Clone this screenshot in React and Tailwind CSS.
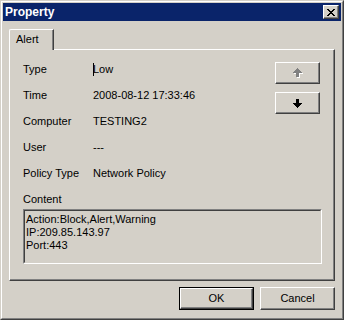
import React from "react";

function Raised({ className = "", children }) {
  return (
    <div
      className={`flex items-center justify-center bg-[#d4d0c8] border border-t-white border-l-white border-r-[#404040] border-b-[#404040] shadow-[inset_-1px_-1px_0_#808080] ${className}`}
    >
      {children}
    </div>
  );
}

function Row({ label, children }) {
  return (
    <div className="flex h-[13px] leading-[13px]">
      <div className="w-[70px]">{label}</div>
      <div className="flex items-center">{children}</div>
    </div>
  );
}

const UP = "M4 0h1v1h1v1h1v1h1v1h1v1h-3v4h-3v-4h-3v-1h1v-1h1v-1h1v-1h1z";
const DOWN = "M3 0h3v4h3v1h-1v1h-1v1h-1v1h-1v1h-1v-1h-1v-1h-1v-1h-1v-1h-1v-1h3z";

export default function App() {
  return (
    <div className="w-[344px] h-[320px] bg-[#d4d0c8] text-[11px] text-black font-['Liberation_Sans',Arial,sans-serif] border border-t-[#d4d0c8] border-l-[#d4d0c8] border-r-[#404040] border-b-[#404040]">
      <div className="h-full border border-t-white border-l-white border-r-[#808080] border-b-[#808080] p-px flex flex-col">
        {/* Title bar */}
        <div className="h-[18px] bg-[#0a246a] flex items-center justify-between pl-[2px] pr-[2px]">
          <span className="text-white font-bold text-[12px] leading-[14px]">Property</span>
          <Raised className="w-[16px] h-[14px]">
            <svg width="8" height="7" viewBox="0 0 8 7" shapeRendering="crispEdges">
              <path d="M0 0h2v1h-2zM6 0h2v1h-2zM1 1h2v1h-2zM5 1h2v1h-2zM2 2h4v1h-4zM3 3h2v1h-2zM2 4h4v1h-4zM1 5h2v1h-2zM5 5h2v1h-2zM0 6h2v1h-2zM6 6h2v1h-2z" fill="#000" />
            </svg>
          </Raised>
        </div>

        {/* Body */}
        <div className="pt-[8px] px-[6px] flex flex-col">
          {/* Tab header */}
          <div className="flex h-[20px]">
            <div className="relative z-10 w-[45px] h-[21px] bg-[#d4d0c8] border-l border-t border-r border-l-white border-t-white border-r-[#404040] rounded-tl-[2px] shadow-[inset_-1px_0_0_#808080] pl-[6px] pt-[3px] leading-[13px]">
              Alert
            </div>
          </div>

          {/* Tab panel */}
          <div className="h-[232px] border border-t-white border-l-white border-r-[#404040] border-b-[#404040] shadow-[inset_-1px_-1px_0_#808080] pl-[13px] pr-[14px] pt-[13px]">
            <div className="flex">
              <div className="flex-1 flex flex-col gap-[13px]">
                <Row label="Type">
                  <span className="inline-block w-px h-[13px] bg-black mr-[-1px]" />
                  <span>Low</span>
                </Row>
                <Row label="Time">2008-08-12 17:33:46</Row>
                <Row label="Computer">TESTING2</Row>
                <Row label="User">---</Row>
                <Row label="Policy Type">Network Policy</Row>
                <div className="h-[13px] leading-[13px]">Content</div>
              </div>
              <div className="w-[45px] -mt-px flex flex-col gap-[8px]">
                <Raised className="h-[22px]">
                  <svg width="10" height="10" viewBox="0 0 10 10" shapeRendering="crispEdges">
                    <path d={UP} fill="#fff" transform="translate(1 1)" />
                    <path d={UP} fill="#808080" />
                  </svg>
                </Raised>
                <Raised className="h-[22px]">
                  <svg width="10" height="10" viewBox="0 0 10 10" shapeRendering="crispEdges">
                    <path d={DOWN} fill="#000" transform="translate(0 1)" />
                  </svg>
                </Raised>
              </div>
            </div>
            <div className="mt-[3px] w-[299px] h-[55px] border border-t-[#808080] border-l-[#808080] border-r-white border-b-white">
              <div className="h-full border border-t-[#404040] border-l-[#404040] border-r-[#d4d0c8] border-b-[#d4d0c8] pl-[1px] pt-[2px] leading-[13px]">
                <div>Action:Block,Alert,Warning</div>
                <div>IP:209.85.143.97</div>
                <div>Port:443</div>
              </div>
            </div>
          </div>

          {/* Buttons */}
          <div className="mt-[6px] flex justify-end gap-[6px]">
            <div className="w-[75px] h-[23px] border border-black">
              <Raised className="w-full h-full">OK</Raised>
            </div>
            <Raised className="w-[75px] h-[23px]">Cancel</Raised>
          </div>
        </div>
      </div>
    </div>
  );
}
